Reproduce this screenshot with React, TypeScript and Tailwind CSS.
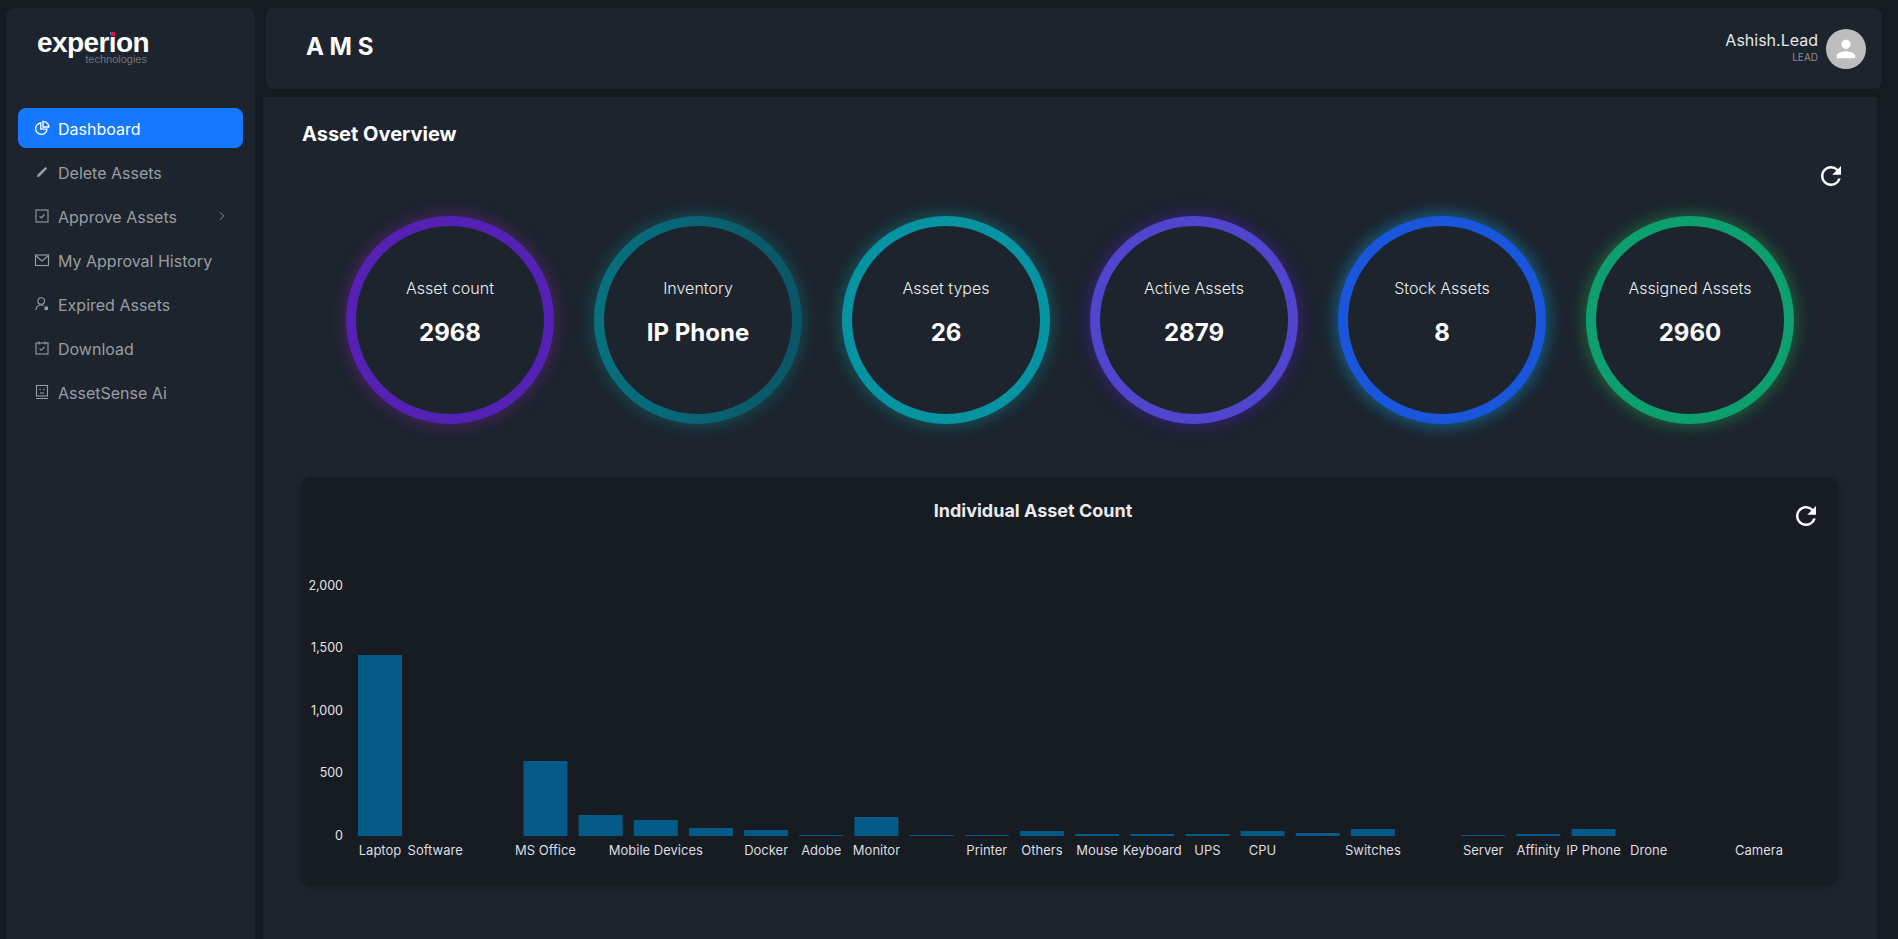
import { ChevronRight } from "lucide-react";
import { MdPerson, MdRefresh } from "react-icons/md";

const NAV_ITEMS = [
  { label: "Dashboard", icon: PieIcon, active: true },
  { label: "Delete Assets", icon: PencilIcon },
  { label: "Approve Assets", icon: CheckSquareIcon, arrow: true },
  { label: "My Approval History", icon: MailIcon },
  { label: "Expired Assets", icon: UserBlockIcon },
  { label: "Download", icon: CalendarIcon },
  { label: "AssetSense Ai", icon: FaceIcon },
];

const STATS = [
  { label: "Asset count", value: "2968", ring: "bg-[#5521b5] shadow-[0_0_16px_2px_rgba(126,34,160,0.45)]" },
  { label: "Inventory", value: "IP Phone", ring: "bg-gradient-to-r from-[#06727f] to-[#0a5565] shadow-[0_0_16px_2px_rgba(6,148,162,0.35)]" },
  { label: "Asset types", value: "26", ring: "bg-[#0694a2] shadow-[0_0_16px_2px_rgba(6,182,190,0.35)]" },
  { label: "Active Assets", value: "2879", ring: "bg-[#5145cd] shadow-[0_0_16px_2px_rgba(76,29,190,0.5)]" },
  { label: "Stock Assets", value: "8", ring: "bg-[#1a56db] shadow-[0_0_16px_3px_rgba(14,165,233,0.45)]" },
  { label: "Assigned Assets", value: "2960", ring: "bg-[#0e9f6e] shadow-[0_0_16px_2px_rgba(34,197,94,0.4)]" },
];

// label is empty where the chart skipped it
const BARS: [string, number][] = [
  ["Laptop", 181], ["Software", 0], ["", 0], ["MS Office", 75], ["", 21], ["Mobile Devices", 16],
  ["", 8], ["Docker", 6], ["Adobe", 1], ["Monitor", 19], ["", 1], ["Printer", 1],
  ["Others", 5], ["Mouse", 2], ["Keyboard", 2], ["UPS", 2], ["CPU", 5], ["", 3],
  ["Switches", 7], ["", 0], ["Server", 1], ["Affinity", 2], ["IP Phone", 7], ["Drone", 0],
  ["", 0], ["Camera", 0],
];

const TICKS: [string, number][] = [
  ["2,000", 587], ["1,500", 649], ["1,000", 711.5], ["500", 774], ["0", 836.5],
];

function PieIcon() {
  return (
    <svg viewBox="0 0 16 16" className="h-4 w-4" fill="none" stroke="currentColor" strokeWidth="1.3">
      <path d="M6.8 3A5.7 5.7 0 1 0 13 9.2H6.8Z" />
      <path d="M9 1.3A5.7 5.7 0 0 1 14.8 7H9Z" />
    </svg>
  );
}

function PencilIcon() {
  return (
    <svg viewBox="0 0 16 16" className="h-4 w-4" fill="currentColor">
      <path d="M3 13.2l.6-2.6L10.8 3.4a.9.9 0 0 1 1.3 0l.5.5a.9.9 0 0 1 0 1.3L5.4 12.6z" />
    </svg>
  );
}

function CheckSquareIcon() {
  return (
    <svg viewBox="0 0 16 16" className="h-4 w-4" fill="none" stroke="currentColor" strokeWidth="1.1">
      <rect x="2" y="2" width="12" height="12" />
      <path d="M5.6 8.2l1.7 1.7 3.2-3.4" />
    </svg>
  );
}

function MailIcon() {
  return (
    <svg viewBox="0 0 16 16" className="h-4 w-4" fill="none" stroke="currentColor" strokeWidth="1.1">
      <rect x="1.5" y="3" width="13" height="10.5" />
      <path d="M1.5 3.5L8 9l6.5-5.5" />
    </svg>
  );
}

function UserBlockIcon() {
  return (
    <svg viewBox="0 0 16 16" className="h-4 w-4" fill="none" stroke="currentColor" strokeWidth="1.1">
      <circle cx="7.2" cy="5" r="3.3" />
      <path d="M2 14c.2-3 2-5 5.2-5 1 0 1.8.2 2.5.6" />
      <rect x="10.5" y="10.5" width="3.5" height="3.5" fill="currentColor" stroke="none" />
    </svg>
  );
}

function CalendarIcon() {
  return (
    <svg viewBox="0 0 16 16" className="h-4 w-4" fill="none" stroke="currentColor" strokeWidth="1.1">
      <rect x="2" y="3" width="12" height="11" />
      <path d="M5 1.5v3M11 1.5v3M5.6 8.6l1.7 1.7 3.2-3.4" />
    </svg>
  );
}

function FaceIcon() {
  return (
    <svg viewBox="0 0 16 16" className="h-4 w-4" fill="none" stroke="currentColor" strokeWidth="1.1">
      <rect x="2.5" y="1.5" width="11" height="10.5" />
      <path d="M2 14.5h12M6 9h4" />
      <path d="M5.5 5.5h1.2M9.3 5.5h1.2" strokeWidth="1.6" />
    </svg>
  );
}

function Sidebar() {
  return (
    <aside className="ml-[6px] mt-2 w-[249px] shrink-0 rounded-t-lg bg-[#1d242d] px-3">
      <div className="relative ml-[19px] h-[100px] pt-[24px] font-['Liberation_Sans',Arial,sans-serif]">
        <div className="text-[28px] font-bold leading-[22px] tracking-[-0.6px] text-white">experion</div>
        <div className="-mt-px w-[110px] text-right text-[11px] leading-[12px] text-[#6f747b]">technologies</div>
        <span className="absolute left-[74px] top-[24px] h-1 w-1 bg-[#e0103a]" />
      </div>
      <nav className="flex flex-col gap-1">
        {NAV_ITEMS.map((item) => {
          const Icon = item.icon;
          return (
            <div
              key={item.label}
              className={
                item.active
                  ? "flex h-10 items-center rounded-lg bg-[#1677ff] pl-4 pr-[14px] text-white"
                  : "flex h-10 items-center rounded-lg pl-4 pr-[14px] text-[#9a9da2]"
              }
            >
              <Icon />
              <span className="ml-2 pt-px text-base leading-none">{item.label}</span>
              {item.arrow && <ChevronRight className="ml-auto h-3.5 w-3.5" strokeWidth={1.5} />}
            </div>
          );
        })}
      </nav>
    </aside>
  );
}

function Header() {
  return (
    <header className="ml-[3px] mr-[-5px] flex h-[81px] shrink-0 items-center justify-between rounded-lg bg-[#1d242d] pl-10 pr-4">
      <div className="mb-1 text-2xl font-bold text-white">A M S</div>
      <div className="flex items-center gap-2">
        <div className="mb-1 text-right">
          <div className="text-base leading-5 text-[#e4e7ea]">Ashish.Lead</div>
          <div className="mt-px text-[10px] leading-3 text-[#8b8f95]">LEAD</div>
        </div>
        <div className="flex h-10 w-10 items-center justify-center rounded-full bg-[#bdbdbd] text-white">
          <MdPerson size={28} />
        </div>
      </div>
    </header>
  );
}

function StatCircle({ label, value, ring }: { label: string; value: string; ring: string }) {
  return (
    <div className={`h-[208px] w-[208px] rounded-full p-[10px] ${ring}`}>
      <div className="flex h-full w-full flex-col items-center justify-center rounded-full bg-[#1d242d] pb-[13px]">
        <div className="text-base font-light leading-6 text-[#eceef0]">{label}</div>
        <div className="mt-[15px] text-2xl font-bold leading-9 text-white">{value}</div>
      </div>
    </div>
  );
}

function BarChart() {
  return (
    <svg viewBox="301 540 1537 346" width={1537} height={346} className="mt-[9px] block">
      {TICKS.map(([tick, y]) => (
        <text key={tick} x={343} y={y} textAnchor="end" dominantBaseline="middle" fontSize={12.5} fill="#e4e6e8">
          {tick}
        </text>
      ))}
      {BARS.map(([label, height], i) => {
        const cx = 380 + i * 55.16;
        return (
          <g key={i}>
            {height > 0 && <rect x={cx - 22} y={836 - height} width={44} height={height} fill="#055a87" />}
            {label && (
              <text x={cx} y={851.5} textAnchor="middle" dominantBaseline="middle" fontSize={13} fill="#dcdee0">
                {label}
              </text>
            )}
          </g>
        );
      })}
    </svg>
  );
}

export default function App() {
  return (
    <div className="flex h-screen overflow-hidden bg-[#161a21] font-['Inter',sans-serif]">
      <Sidebar />
      <div className="ml-[8px] flex h-full w-[1614px] shrink-0 flex-col pt-2">
        <Header />
        <main className="mt-2 flex-1 bg-[#1d242d] px-10 pt-[23px]">
          <h1 className="-ml-px text-xl font-bold leading-7 text-white">Asset Overview</h1>
          <div className="mt-[13px] flex justify-end">
            <MdRefresh size={30} className="mr-[-9px] text-white" />
          </div>
          <div className="mt-[25px] flex justify-center gap-10">
            {STATS.map((s) => (
              <StatCircle key={s.label} {...s} />
            ))}
          </div>
          <section className="mt-[54px] ml-[-2px] w-[1537px] rounded-[10px] bg-[#171b22] shadow-[0_0_6px_rgba(0,0,0,0.25)]">
            <div className="flex items-start pr-[17px] pt-[19px]">
              <div className="flex-1 pr-[26px] text-center text-lg font-bold leading-7 text-[#e8eaec]">
                Individual Asset Count
              </div>
              <MdRefresh size={30} className="mt-1 text-white" />
            </div>
            <BarChart />
          </section>
        </main>
      </div>
    </div>
  );
}
